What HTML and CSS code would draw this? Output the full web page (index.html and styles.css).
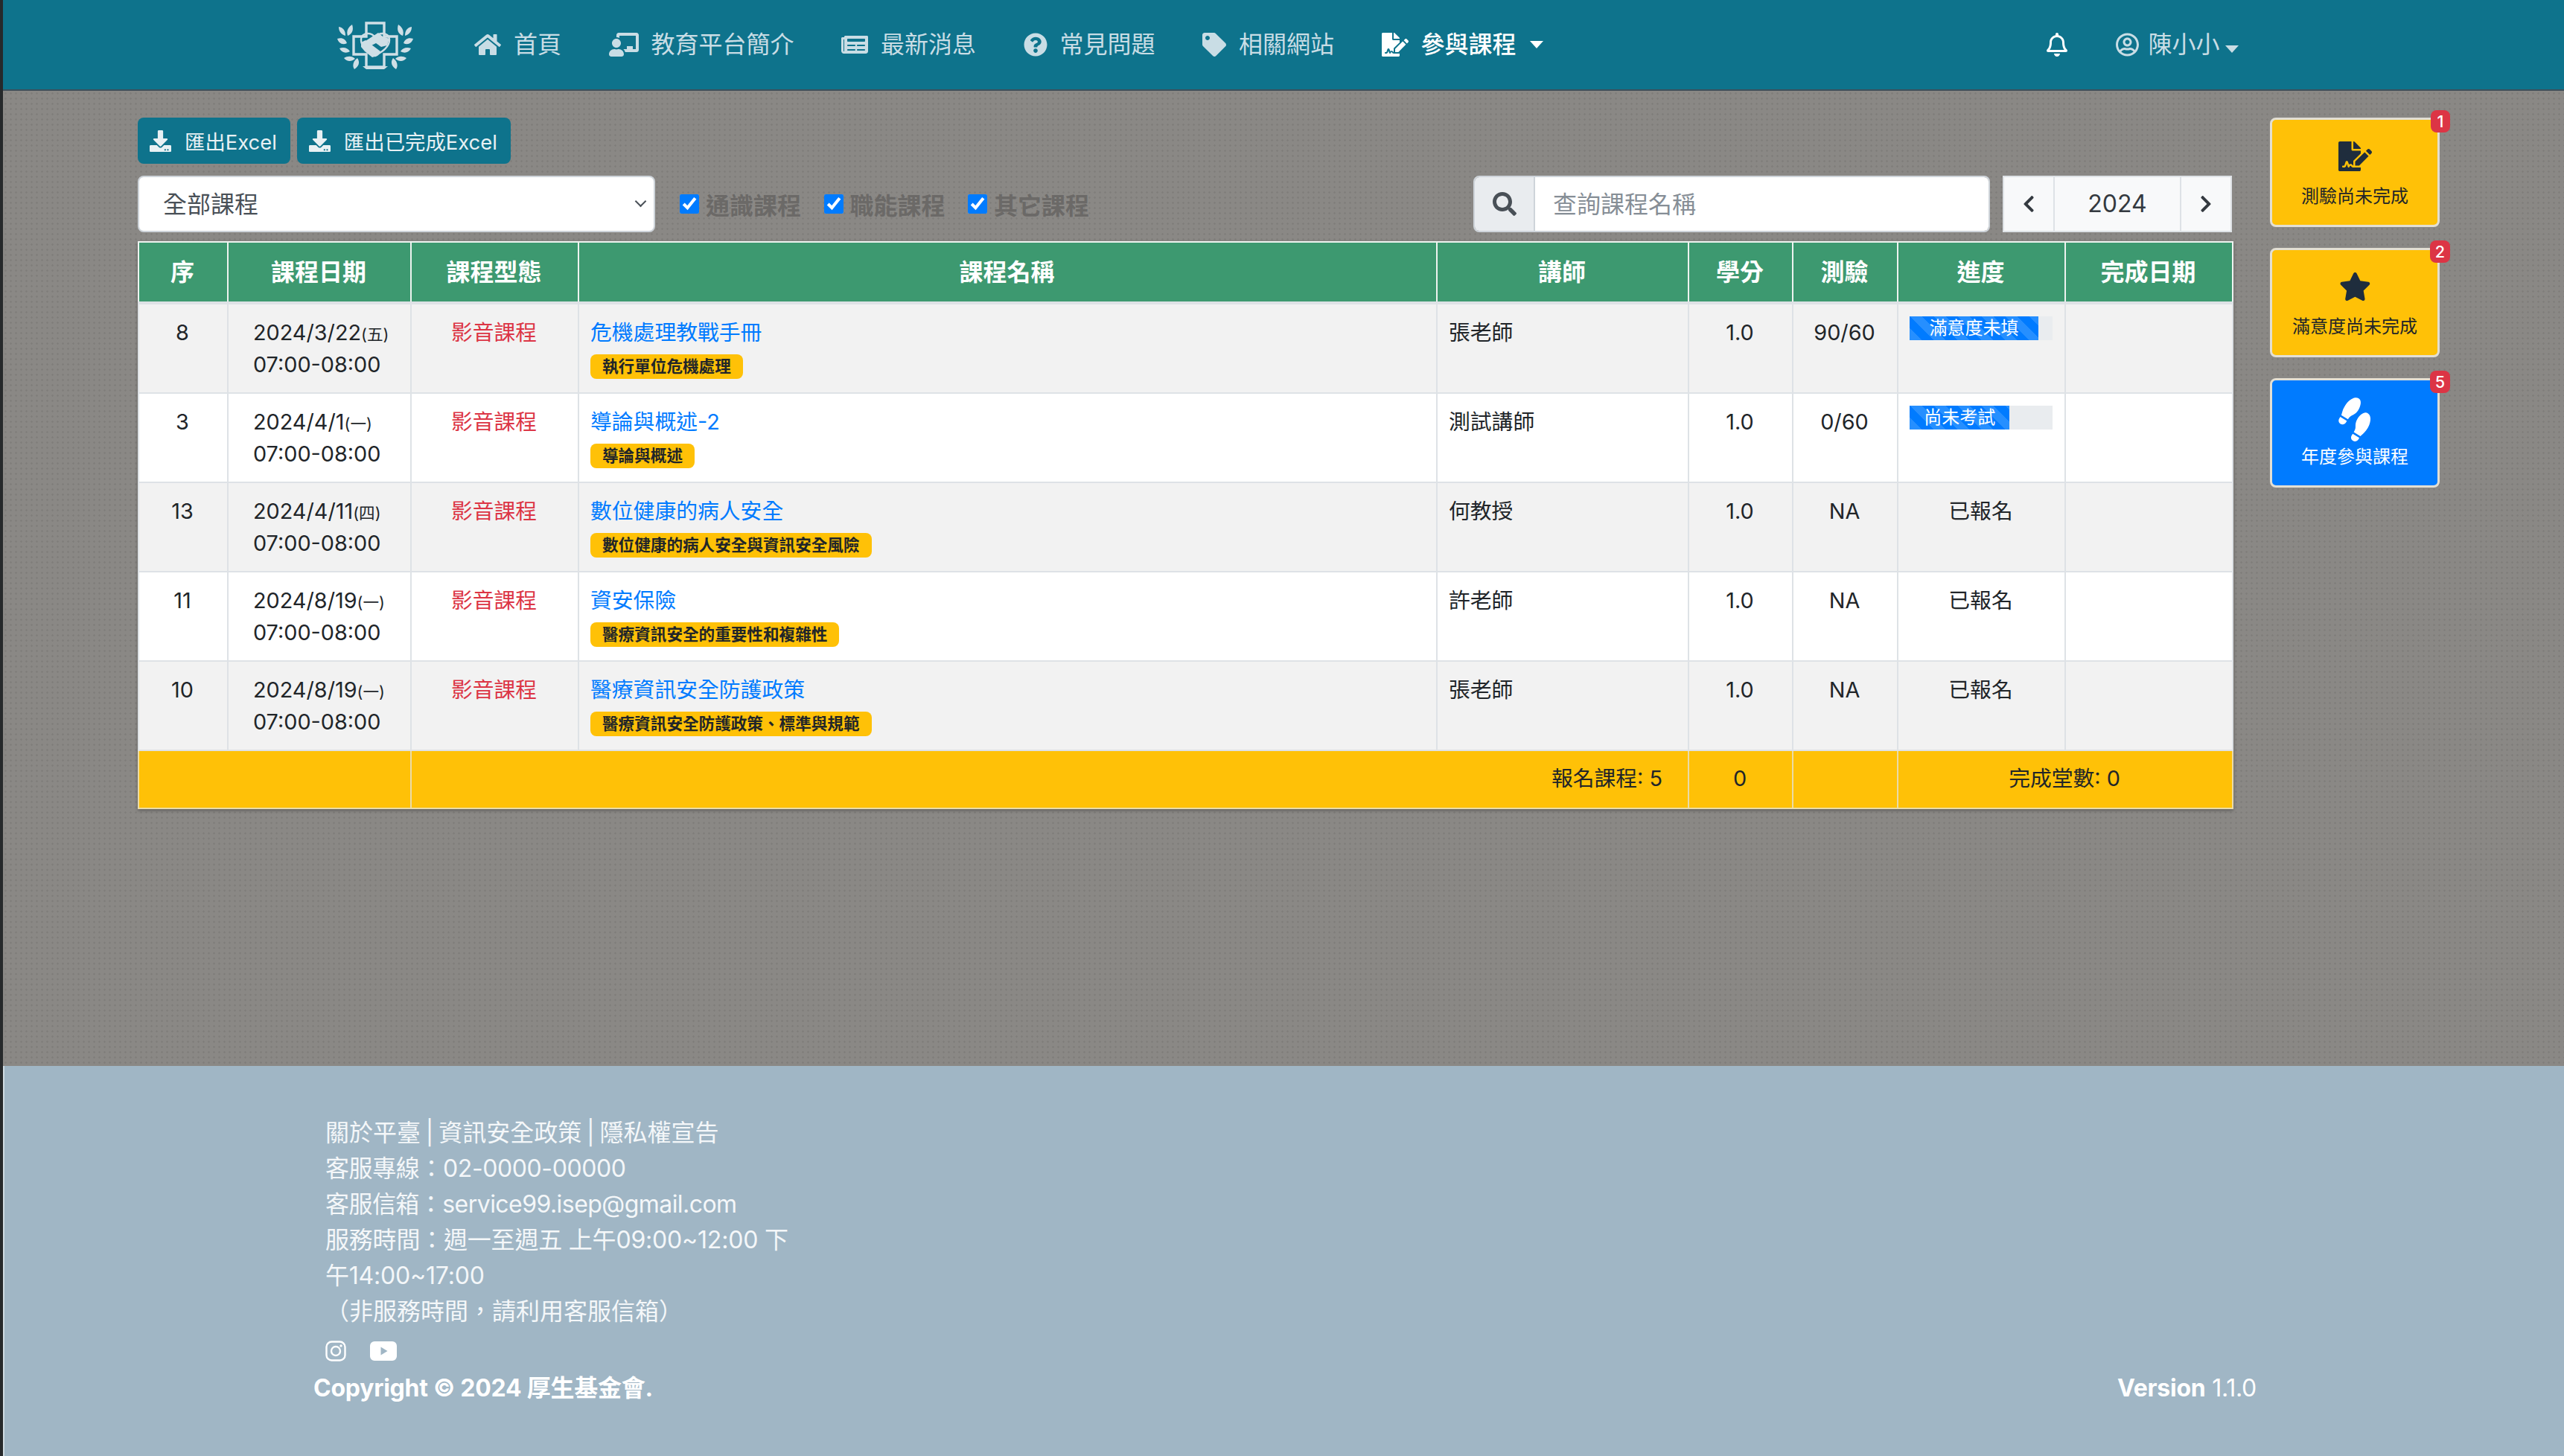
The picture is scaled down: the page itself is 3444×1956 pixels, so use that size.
FILE: index.html
```html
<!DOCTYPE html>
<html lang="zh-Hant">

<head>
    <meta charset="UTF-8">
    <title>參與課程</title>
    <link rel="stylesheet" href="styles.css">
</head>

<body>
    <svg class="defs" aria-hidden="true">
        <symbol id="i-download" viewBox="0 0 512 512"><path d="M216 0h80c13.3 0 24 10.7 24 24v168h87.7c17.8 0 26.7 21.5 14.1 34.1L269.7 378.3c-7.5 7.5-19.8 7.5-27.3 0L90.1 226.1c-12.6-12.6-3.7-34.1 14.1-34.1H192V24c0-13.3 10.7-24 24-24zm296 376v112c0 13.3-10.7 24-24 24H24c-13.3 0-24-10.7-24-24V376c0-13.3 10.7-24 24-24h146.7l49 49c20.1 20.1 52.5 20.1 72.6 0l49-49H488c13.3 0 24 10.7 24 24zm-124 88c0-11-9-20-20-20s-20 9-20 20 9 20 20 20 20-9 20-20zm64 0c0-11-9-20-20-20s-20 9-20 20 9 20 20 20 20-9 20-20z"/></symbol>
        <symbol id="i-sign" viewBox="0 0 576 512"><path d="M218.17 424.14c-2.95-5.92-8.09-6.52-10.17-6.52s-7.22.59-10.02 6.19l-7.67 15.34c-6.37 12.78-25.03 11.37-29.48-2.09L144 386.59l-10.61 31.88c-5.89 17.66-22.38 29.53-41 29.53H80c-8.84 0-16-7.16-16-16s7.16-16 16-16h12.39c4.83 0 9.11-3.08 10.64-7.66l18.19-54.64c3.3-9.81 12.44-16.41 22.78-16.41s19.48 6.59 22.77 16.41l13.88 41.64c19.75-16.19 54.06-9.7 66 14.16 1.89 3.78 5.49 5.95 9.36 6.26v-82.12l128-127.09V160H248c-13.2 0-24-10.8-24-24V0H24C10.7 0 0 10.7 0 24v464c0 13.3 10.7 24 24 24h336c13.3 0 24-10.7 24-24v-40l-128-.11c-16.12-.31-30.58-9.28-37.83-23.75zM384 121.9c0-6.3-2.5-12.4-7-16.9L279.1 7c-4.5-4.5-10.6-7-17-7H256v128h128v-6.1zm-96 225.06V416h68.99l161.68-162.78-67.88-67.88L288 346.96zm280.54-179.63l-31.87-31.87c-9.94-9.94-26.07-9.94-36.01 0l-27.25 27.25 67.88 67.88 27.25-27.25c9.95-9.94 9.95-26.07 0-36.01z"/></symbol>
    </svg>

    <div class="page">
        <header class="navbar">
            <svg class="logo" viewBox="0 0 100 66">
                <g fill="none" stroke="#cfdfe6" stroke-width="3.4">
                    <path d="M38 3h24v18h17v24H62v17H38V45H21V21h17z"/>
                    <path d="M50 47C40 41 31 35 31 26c0-6 4-9 9-9 4 0 8 2 10 6 2-4 6-6 10-6 5 0 9 3 9 9 0 9-9 15-19 21z" stroke-width="2.4"/>
                </g>
                <g fill="#cfdfe6">
                    <path d="M37 27l17-11 6 5 9 3-3 9-8 2-7-5-6 3z"/>
                    <path d="M31 29l6-3 20 15-4 6-7 2-10-8-5-6z"/>
                    <path d="M1 8c6 1 9 5 9 12-6-2-9-6-9-12zM19 5c2 6 1 12-6 15-2-6 0-11 6-15zM-1 24c6-2 11 0 13 6-6 3-11 0-13-6zM2 37c5-2 11-1 14 4-5 3-11 2-14-4zM8 50c5-3 11-3 15 1-5 4-11 4-15-1zM22 65c-3-4-2-11 4-15 4 6 2 11-4 15zM99 8c-6 1-9 5-9 12 6-2 9-6 9-12zM81 5c-2 6-1 12 6 15 2-6 0-11-6-15zM101 24c-6-2-11 0-13 6 6 3 11 0 13-6zM98 37c-5-2-11-1-14 4 5 3 11 2 14-4zM92 50c-5-3-11-3-15 1 5 4 11 4 15-1zM78 65c3-4 2-11-4-15-4 6-2 11 4 15z"/>
                    <path d="M33 61h34l-5 4H38z"/>
                </g>
            </svg>
            <nav class="nav-links">
                <a class="nav-item" href="#">
                    <svg class="icon-32" viewBox="0 0 576 512"><path d="M280.37 148.26L96 300.11V464a16 16 0 0 0 16 16l112.06-.29a16 16 0 0 0 15.92-16V368a16 16 0 0 1 16-16h64a16 16 0 0 1 16 16v95.64a16 16 0 0 0 16 16.05L464 480a16 16 0 0 0 16-16V300L295.67 148.26a12.19 12.19 0 0 0-15.3 0zM571.6 251.47L488 182.56V44.05a12 12 0 0 0-12-12h-56a12 12 0 0 0-12 12v72.61L318.47 43a48 48 0 0 0-61 0L4.34 251.47a12 12 0 0 0-1.6 16.9l25.5 31A12 12 0 0 0 45.15 301l235.22-193.74a12.19 12.19 0 0 1 15.3 0L530.9 301a12 12 0 0 0 16.9-1.6l25.5-31a12 12 0 0 0-1.7-16.93z"/></svg>
                    首頁
                </a>
                <a class="nav-item" href="#">
                    <svg class="icon-32" viewBox="0 0 640 512"><path d="M208 352c-2.39 0-4.78.35-7.06 1.09C187.98 357.3 174.35 360 160 360c-14.35 0-27.98-2.7-40.95-6.91-2.28-.74-4.66-1.09-7.05-1.09C49.94 352-.33 402.48 0 464.62.14 490.88 21.73 512 48 512h224c26.27 0 47.86-21.12 48-47.38.33-62.14-49.94-112.62-112-112.62zm-48-32c53.02 0 96-42.98 96-96s-42.98-96-96-96-96 42.98-96 96 42.98 96 96 96zM592 0H208c-26.47 0-48 22.25-48 49.59V96c23.42 0 45.1 6.78 64 17.8V64h352v288h-64v-64H384v64h-76.24c19.1 16.69 33.12 38.73 39.69 64H592c26.47 0 48-22.25 48-49.59V49.59C640 22.25 618.47 0 592 0z"/></svg>
                    教育平台簡介
                </a>
                <a class="nav-item" href="#">
                    <svg class="icon-32" viewBox="0 0 576 512"><path d="M552 64H88c-13.255 0-24 10.745-24 24v8H24c-13.255 0-24 10.745-24 24v272c0 30.928 25.072 56 56 56h472c26.51 0 48-21.49 48-48V88c0-13.255-10.745-24-24-24zM56 400a8 8 0 0 1-8-8V144h16v248a8 8 0 0 1-8 8zm236-16H140c-6.627 0-12-5.373-12-12v-8c0-6.627 5.373-12 12-12h152c6.627 0 12 5.373 12 12v8c0 6.627-5.373 12-12 12zm208 0H348c-6.627 0-12-5.373-12-12v-8c0-6.627 5.373-12 12-12h152c6.627 0 12 5.373 12 12v8c0 6.627-5.373 12-12 12zm-208-96H140c-6.627 0-12-5.373-12-12v-8c0-6.627 5.373-12 12-12h152c6.627 0 12 5.373 12 12v8c0 6.627-5.373 12-12 12zm208 0H348c-6.627 0-12-5.373-12-12v-8c0-6.627 5.373-12 12-12h152c6.627 0 12 5.373 12 12v8c0 6.627-5.373 12-12 12zm0-96H140c-6.627 0-12-5.373-12-12v-40c0-6.627 5.373-12 12-12h360c6.627 0 12 5.373 12 12v40c0 6.627-5.373 12-12 12z"/></svg>
                    最新消息
                </a>
                <a class="nav-item" href="#">
                    <svg class="icon-32" viewBox="0 0 512 512"><path d="M504 256c0 136.997-111.043 248-248 248S8 392.997 8 256C8 119.083 119.043 8 256 8s248 111.083 248 248zM262.655 90c-54.497 0-89.255 22.957-116.549 63.758-3.536 5.286-2.353 12.415 2.715 16.258l34.699 26.31c5.205 3.947 12.621 3.008 16.665-2.122 17.864-22.658 30.113-35.797 57.303-35.797 20.429 0 45.698 13.148 45.698 32.958 0 14.976-12.363 22.667-32.534 33.976C247.128 238.528 216 254.941 216 296v4c0 6.627 5.373 12 12 12h56c6.627 0 12-5.373 12-12v-1.333c0-28.462 83.186-29.647 83.186-106.667 0-58.002-60.165-102-116.531-102zM256 338c-25.365 0-46 20.635-46 46 0 25.364 20.635 46 46 46s46-20.636 46-46c0-25.365-20.635-46-46-46z"/></svg>
                    常見問題
                </a>
                <a class="nav-item" href="#">
                    <svg class="icon-32" viewBox="0 0 512 512"><path d="M0 252.118V48C0 21.49 21.49 0 48 0h204.118a48 48 0 0 1 33.941 14.059l211.882 211.882c18.745 18.745 18.745 49.137 0 67.882L293.823 497.941c-18.745 18.745-49.137 18.745-67.882 0L14.059 286.059A48 48 0 0 1 0 252.118zM112 64c-26.51 0-48 21.49-48 48s21.49 48 48 48 48-21.49 48-48-21.49-48-48-48z"/></svg>
                    相關網站
                </a>
                <a class="nav-item active" href="#">
                    <svg class="icon-32" viewBox="0 0 576 512"><use href="#i-sign"/></svg>
                    參與課程
                    <span class="caret"></span>
                </a>
            </nav>
            <div class="nav-user">
                <svg class="bell" viewBox="0 0 448 512"><path d="M439.39 362.29c-19.32-20.76-55.47-51.99-55.47-154.29 0-77.7-54.48-139.9-127.94-155.16V32c0-17.67-14.32-32-31.98-32s-31.98 14.33-31.98 32v20.84C118.56 68.1 64.08 130.3 64.08 208c0 102.3-36.15 133.53-55.47 154.29-6 6.45-8.66 14.16-8.61 21.71.11 16.4 12.98 32 32.1 32h383.8c19.12 0 32-15.6 32.1-32 .05-7.55-2.61-15.27-8.61-21.71zM67.53 368c21.22-27.97 44.42-74.33 44.53-159.42 0-.2-.06-.38-.06-.58 0-61.86 50.14-112 112-112s112 50.14 112 112c0 .2-.06.38-.06.58.11 85.1 23.31 131.46 44.53 159.42H67.53zM224 512c35.32 0 63.97-28.65 63.97-64H160.03c0 35.35 28.65 64 63.97 64z"/></svg>
                <a class="user" href="#">
                    <svg class="icon-32" viewBox="0 0 496 512"><path d="M248 104c-53 0-96 43-96 96s43 96 96 96 96-43 96-96-43-96-96-96zm0 144c-26.5 0-48-21.5-48-48s21.5-48 48-48 48 21.5 48 48-21.5 48-48 48zm0-240C111 8 0 119 0 256s111 248 248 248 248-111 248-248S385 8 248 8zm0 448c-49.7 0-95.1-18.3-130.1-48.4 14.9-23 40.4-38.6 69.6-39.5 20.8 6.4 40.6 9.6 60.5 9.6s39.7-3.1 60.5-9.6c29.2 1 54.7 16.5 69.6 39.5-35 30.1-80.4 48.4-130.1 48.4zm162.7-84.1c-24.4-31.4-62.1-51.9-105.1-51.9-10.2 0-26 9.6-57.6 9.6-31.5 0-47.4-9.6-57.6-9.6-42.9 0-80.6 20.5-105.1 51.9C61.9 339.2 48 299.2 48 256c0-110.3 89.7-200 200-200s200 89.7 200 200c0 43.2-13.9 83.2-37.3 115.9z"/></svg>
                    陳小小
                    <span class="caret low"></span>
                </a>
            </div>
        </header>

        <main class="main">
            <section class="content">
                <div class="export-row">
                    <a class="btn-export" href="#"><svg class="icon-29" viewBox="0 0 512 512"><use href="#i-download"/></svg>匯出Excel</a>
                    <a class="btn-export" href="#"><svg class="icon-29" viewBox="0 0 512 512"><use href="#i-download"/></svg>匯出已完成Excel</a>
                </div>

                <div class="toolbar">
                    <div class="select-wrap">
                        <select class="select">
                            <option>全部課程</option>
                        </select>
                    </div>
                    <div class="filters">
                        <label class="filter"><input type="checkbox" checked>通識課程</label>
                        <label class="filter"><input type="checkbox" checked>職能課程</label>
                        <label class="filter"><input type="checkbox" checked>其它課程</label>
                    </div>
                    <div class="search">
                        <span class="search-icon">
                            <svg viewBox="0 0 512 512"><path d="M505 442.7L405.3 343c-4.5-4.5-10.6-7-17-7H372c27.6-35.3 44-79.7 44-128C416 93.1 322.9 0 208 0S0 93.1 0 208s93.1 208 208 208c48.3 0 92.7-16.4 128-44v16.3c0 6.4 2.5 12.5 7 17l99.7 99.7c9.4 9.4 24.6 9.4 33.9 0l28.3-28.3c9.4-9.4 9.4-24.6.1-34zM208 336c-70.7 0-128-57.2-128-128 0-70.7 57.2-128 128-128 70.7 0 128 57.2 128 128 0 70.7-57.2 128-128 128z"/></svg>
                        </span>
                        <input class="search-input" type="text" placeholder="查詢課程名稱">
                    </div>
                    <div class="year">
                        <span class="year-arrow"><svg viewBox="0 0 320 512"><path d="M34.52 239.03L228.87 44.69c9.37-9.37 24.57-9.37 33.94 0l22.67 22.67c9.36 9.36 9.37 24.52.04 33.9L131.49 256l154.02 154.75c9.34 9.38 9.32 24.54-.04 33.9l-22.67 22.67c-9.37 9.37-24.57 9.37-33.94 0L34.52 272.97c-9.37-9.37-9.37-24.57 0-33.94z"/></svg></span>
                        <span class="year-value">2024</span>
                        <span class="year-arrow"><svg viewBox="0 0 320 512"><path d="M285.476 272.971L91.132 467.314c-9.373 9.373-24.569 9.373-33.941 0l-22.667-22.667c-9.357-9.357-9.375-24.522-.04-33.901L188.505 256 34.484 101.255c-9.335-9.379-9.317-24.544.04-33.901l22.667-22.667c9.373-9.373 24.569-9.373 33.941 0L285.475 239.03c9.373 9.372 9.373 24.568.001 33.941z"/></svg></span>
                    </div>
                </div>

                <table class="courses">
                    <colgroup>
                        <col class="c-seq"><col class="c-date"><col class="c-type"><col class="c-name"><col class="c-teacher"><col class="c-credit"><col class="c-test"><col class="c-progress"><col class="c-done">
                    </colgroup>
                    <thead>
                        <tr>
                            <th>序</th><th>課程日期</th><th>課程型態</th><th>課程名稱</th><th>講師</th><th>學分</th><th>測驗</th><th>進度</th><th>完成日期</th>
                        </tr>
                    </thead>
                    <tbody>
                        <tr>
                            <td class="center">8</td>
                            <td class="date">2024/3/22<small>(五)</small><br>07:00-08:00</td>
                            <td class="center type">影音課程</td>
                            <td><a class="course-link" href="#">危機處理教戰手冊</a><span class="tag">執行單位危機處理</span></td>
                            <td>張老師</td>
                            <td class="center">1.0</td>
                            <td class="center">90/60</td>
                            <td><div class="progress"><div class="progress-bar w90">滿意度未填</div></div></td>
                            <td></td>
                        </tr>
                        <tr>
                            <td class="center">3</td>
                            <td class="date">2024/4/1<small>(一)</small><br>07:00-08:00</td>
                            <td class="center type">影音課程</td>
                            <td><a class="course-link" href="#">導論與概述-2</a><span class="tag">導論與概述</span></td>
                            <td>測試講師</td>
                            <td class="center">1.0</td>
                            <td class="center">0/60</td>
                            <td><div class="progress"><div class="progress-bar w70">尚未考試</div></div></td>
                            <td></td>
                        </tr>
                        <tr>
                            <td class="center">13</td>
                            <td class="date">2024/4/11<small>(四)</small><br>07:00-08:00</td>
                            <td class="center type">影音課程</td>
                            <td><a class="course-link" href="#">數位健康的病人安全</a><span class="tag">數位健康的病人安全與資訊安全風險</span></td>
                            <td>何教授</td>
                            <td class="center">1.0</td>
                            <td class="center">NA</td>
                            <td class="center">已報名</td>
                            <td></td>
                        </tr>
                        <tr>
                            <td class="center">11</td>
                            <td class="date">2024/8/19<small>(一)</small><br>07:00-08:00</td>
                            <td class="center type">影音課程</td>
                            <td><a class="course-link" href="#">資安保險</a><span class="tag">醫療資訊安全的重要性和複雜性</span></td>
                            <td>許老師</td>
                            <td class="center">1.0</td>
                            <td class="center">NA</td>
                            <td class="center">已報名</td>
                            <td></td>
                        </tr>
                        <tr>
                            <td class="center">10</td>
                            <td class="date">2024/8/19<small>(一)</small><br>07:00-08:00</td>
                            <td class="center type">影音課程</td>
                            <td><a class="course-link" href="#">醫療資訊安全防護政策</a><span class="tag">醫療資訊安全防護政策、標準與規範</span></td>
                            <td>張老師</td>
                            <td class="center">1.0</td>
                            <td class="center">NA</td>
                            <td class="center">已報名</td>
                            <td></td>
                        </tr>
                    </tbody>
                    <tfoot>
                        <tr>
                            <td colspan="2"></td>
                            <td colspan="3" class="right">報名課程: 5</td>
                            <td class="center">0</td>
                            <td></td>
                            <td colspan="2" class="center">完成堂數: 0</td>
                        </tr>
                    </tfoot>
                </table>
            </section>

            <aside class="side">
                <a class="card warning" href="#">
                    <span class="badge">1</span>
                    <span class="card-icon"><svg class="icon-sign" viewBox="0 0 576 512"><use href="#i-sign"/></svg></span>
                    <span class="card-label">測驗尚未完成</span>
                </a>
                <a class="card warning" href="#">
                    <span class="badge">2</span>
                    <span class="card-icon"><svg class="icon-star" viewBox="0 0 576 512"><path d="M259.3 17.8L194 150.2 47.9 171.5c-26.2 3.8-36.7 36.1-17.7 54.6l105.7 103-25 145.5c-4.5 26.3 23.2 46 46.4 33.7L288 439.6l130.7 68.7c23.2 12.2 50.9-7.4 46.4-33.7l-25-145.5 105.7-103c19-18.5 8.5-50.8-17.7-54.6L382 150.2 316.7 17.8c-11.7-23.6-45.6-23.9-57.4 0z"/></svg></span>
                    <span class="card-label">滿意度尚未完成</span>
                </a>
                <a class="card primary" href="#">
                    <span class="badge">5</span>
                    <span class="card-icon"><svg class="icon-shoe" viewBox="0 0 640 512"><path d="M192 160h32V32h-32c-35.35 0-64 28.65-64 64s28.65 64 64 64zM0 416c0 35.35 28.65 64 64 64h32V352H64c-35.35 0-64 28.65-64 64zm337.46-128c-34.91 0-76.16 13.12-104.73 32-24.79 16.38-44.52 32-104.73 32v128l57.53 15.97c26.21 7.28 53.01 13.12 80.31 15.05 32.69 2.31 65.6.67 97.58-6.2C472.9 481.3 512 429.22 512 384c0-64-84.02-96-174.54-96zM491.42 7.19C459.44.32 426.53-1.33 393.84.99c-27.3 1.93-54.1 7.77-80.31 15.04L256 32v128c60.2 0 79.94 15.62 104.73 32 28.57 18.88 69.82 32 104.73 32C555.98 224 640 192 640 128c0-45.22-39.1-97.3-148.58-120.81z"/></svg></span>
                    <span class="card-label">年度參與課程</span>
                </a>
            </aside>
        </main>

        <footer class="footer">
            <div class="footer-info">
                <div class="links">關於平臺 | 資訊安全政策 | 隱私權宣告</div>
                <div class="phone">客服專線：02-0000-00000</div>
                <div class="mail">客服信箱：service99.isep@gmail.com</div>
                <div class="hours">服務時間：週一至週五 上午09:00~12:00 下午14:00~17:00</div>
                <div>（非服務時間，請利用客服信箱）</div>
                <div class="social">
                    <svg class="ig" viewBox="0 0 28 28"><rect x="1.5" y="1.5" width="25" height="25" rx="7" fill="none" stroke="#fff" stroke-width="2.4"/><circle cx="14" cy="14" r="6" fill="none" stroke="#fff" stroke-width="2.4"/><circle cx="21" cy="7" r="1.7" fill="#fff"/></svg>
                    <svg class="yt" viewBox="0 0 36 26"><path fill="#fff" fill-rule="evenodd" d="M6 0h24a6 6 0 0 1 6 6v14a6 6 0 0 1-6 6H6a6 6 0 0 1-6-6V6a6 6 0 0 1 6-6zM14.500 7.500v11l9-5.500z"/></svg>
                </div>
            </div>
            <div class="footer-bottom">
                <strong>Copyright © 2024 厚生基金會.</strong>
                <span><strong>Version</strong> 1.1.0</span>
            </div>
        </footer>
    </div>
</body>

</html>
```

FILE: styles.css
```css
* {
    box-sizing: border-box;
}

body {
    margin: 0;
    font-family: Inter, "Noto Sans CJK TC", sans-serif;
    font-size: 28.8px;
    color: #212529;
}

a {
    text-decoration: none;
}

.defs {
    display: none;
}

.page {
    display: flex;
    flex-direction: column;
    min-height: 1956px;
    border-left: 4px solid #26292b;
}

/* navbar */
.navbar {
    display: flex;
    align-items: center;
    height: 122px;
    padding-left: 450px;
    background: #0e738c;
    border-bottom: 2px solid #3e4f5a;
}

.logo {
    width: 100px;
    height: 66px;
    margin-top: 1px;
    overflow: visible;
}

.nav-links {
    display: flex;
    gap: 63.5px;
    margin-left: 83px;
}

.nav-item,
.user {
    display: flex;
    align-items: center;
    gap: 17px;
    font-size: 32px;
    line-height: 48px;
    color: #c9dde5;
    fill: #c9dde5;
}

.nav-item.active {
    color: #fff;
    fill: #fff;
    font-weight: 500;
}

.icon-32 {
    height: 32px;
}

.caret {
    width: 0;
    height: 0;
    margin-left: 1px;
    border-top: 10px solid currentColor;
    border-left: 9px solid transparent;
    border-right: 9px solid transparent;
}

.caret.low {
    margin: 12px 0 0 -6px;
}

.nav-user {
    display: flex;
    align-items: center;
    gap: 65px;
    margin-left: 676px;
}

.bell {
    width: 28px;
    height: 32px;
    fill: #fff;
}

.user {
    gap: 13px;
}

/* main area */
.main {
    display: flex;
    flex: 1;
    padding: 36px 0 0 181px;
    background-color: #8a8885;
    background-image: radial-gradient(circle, #807e7b 1px, transparent 1.5px);
    background-size: 7px 7px;
}

.content {
    width: 2813px;
}

.export-row {
    display: flex;
    gap: 9px;
}

.btn-export {
    display: flex;
    align-items: center;
    gap: 18px;
    height: 62px;
    padding: 0 18px 0 16px;
    border-radius: 8px;
    background: #0e738c;
    color: #e8f1f4;
    fill: #e8f1f4;
    font-size: 27.4px;
}

.icon-29 {
    width: 29px;
    height: 29px;
}

.toolbar {
    display: flex;
    align-items: center;
    margin-top: 16px;
    height: 76px;
}

.select-wrap {
    position: relative;
    width: 695px;
    height: 76px;
}

.select-wrap::after {
    content: "";
    position: absolute;
    top: 29px;
    right: 14px;
    width: 9px;
    height: 9px;
    border-right: 2px solid #495057;
    border-bottom: 2px solid #495057;
    transform: rotate(45deg);
}

.select {
    appearance: none;
    width: 100%;
    height: 100%;
    padding: 0 32px;
    border: 2px solid #ced4da;
    border-radius: 8px;
    background: #fff;
    color: #495057;
    font: inherit;
    font-size: 32px;
}

.filters {
    display: flex;
    gap: 30.5px;
    margin-left: 33px;
}

.filter {
    display: flex;
    align-items: center;
    gap: 9px;
    font-size: 32px;
    font-weight: 700;
    color: #6b6967;
}

.filter input {
    width: 26px;
    height: 26px;
    margin: 0;
    accent-color: #007bff;
}

.search {
    display: flex;
    width: 694px;
    height: 76px;
    margin-left: auto;
    border: 2px solid #ced4da;
    border-radius: 8px;
    overflow: hidden;
}

.search-icon {
    display: flex;
    align-items: center;
    justify-content: center;
    width: 81px;
    background: #e9ecef;
    border-right: 2px solid #ced4da;
    fill: #495057;
}

.search-icon svg {
    width: 32px;
    height: 32px;
}

.search-input {
    flex: 1;
    min-width: 0;
    padding: 0 24px;
    border: 0;
    background: #fff;
    font: inherit;
    font-size: 32px;
}

.search-input::placeholder {
    color: #868e96;
}

.year {
    display: flex;
    width: 308px;
    height: 76px;
    margin-left: 17px;
    background: #f8f9fa;
    border: 2px solid #dee2e6;
    color: #343a40;
    font-size: 32px;
}

.year-arrow {
    display: flex;
    align-items: center;
    justify-content: center;
    width: 66px;
    fill: #343a40;
}

.year-arrow svg {
    width: 16px;
    height: 26px;
}

.year-value {
    flex: 1;
    line-height: 72px;
    text-align: center;
    border-left: 2px solid #dee2e6;
    border-right: 2px solid #dee2e6;
}

/* table */
.courses {
    width: 2813px;
    margin-top: 12px;
    border: 2px solid #e6e8ea;
    border-collapse: collapse;
    table-layout: fixed;
    box-shadow: 0 2px 4px rgba(0, 0, 0, .3);
    background: #fff;
}

.c-seq { width: 120px; }
.c-date { width: 246px; }
.c-type { width: 225px; }
.c-name { width: 1153px; }
.c-teacher { width: 338px; }
.c-credit { width: 140px; }
.c-test { width: 141px; }
.c-progress { width: 225px; }
.c-done { width: 225px; }

.courses th {
    height: 82px;
    padding: 0 2px 6px 0;
    border: 2px solid #eef3f0;
    border-bottom: 4px solid #dee2e6;
    background: #3d9970;
    color: #fff;
    font-size: 32px;
    font-weight: 700;
}

.courses td {
    height: 120px;
    padding: 16px 15px;
    border: 2px solid #dee2e6;
    line-height: 43px;
    vertical-align: top;
}

.courses tbody tr:nth-child(odd) {
    background: #f2f2f2;
}

.courses td.center {
    padding-left: 14px;
    padding-right: 16px;
    text-align: center;
}

.courses td.right {
    padding-right: 34px;
    text-align: right;
}

.courses .date {
    padding-left: 33px;
    white-space: nowrap;
}

.date small {
    font-size: 21.6px;
    line-height: 0;
}

.type {
    color: #dc3545;
}

.course-link {
    display: block;
    color: #007bff;
}

.tag {
    display: block;
    width: fit-content;
    height: 33px;
    margin-top: 8px;
    padding: 0 16px;
    border-radius: 8px;
    background: #ffc107;
    color: #212529;
    font-size: 21.6px;
    font-weight: 700;
    line-height: 33px;
}

.progress {
    height: 32px;
    margin-right: 1px;
    background: #e9ecef;
}

.progress-bar {
    height: 100%;
    background-color: #007bff;
    background-image: linear-gradient(45deg, rgba(255, 255, 255, .15) 25%, transparent 25%, transparent 50%, rgba(255, 255, 255, .15) 50%, rgba(255, 255, 255, .15) 75%, transparent 75%);
    background-size: 32px 32px;
    color: #fff;
    font-size: 24px;
    line-height: 32px;
    text-align: center;
}

.w90 { width: 90%; }
.w70 { width: 70%; }

.courses tfoot td {
    height: 78px;
    border-color: #eadba8;
    background: #ffc107;
    line-height: 42px;
}

/* side cards */
.side {
    display: flex;
    flex-direction: column;
    gap: 28px;
    width: 228px;
    margin-left: 51px;
}

.card {
    position: relative;
    display: flex;
    flex-direction: column;
    align-items: center;
    height: 147px;
    padding-top: 29px;
    border: 3px solid #e3dfd3;
    border-radius: 8px;
}

.card.warning {
    background: #ffc107;
    color: #212529;
    fill: #1f2d3d;
}

.card.primary {
    background: #007bff;
    color: #fff;
    fill: #fff;
}

.badge {
    position: absolute;
    top: -13px;
    right: -17px;
    min-width: 26px;
    height: 30px;
    padding: 0 7px;
    border-radius: 8px;
    background: #dc3545;
    color: #fff;
    font-size: 21.6px;
    font-weight: 500;
    line-height: 30px;
    text-align: center;
}

.card-icon {
    display: flex;
    align-items: center;
    justify-content: center;
    height: 40px;
}

.icon-sign {
    height: 40px;
}

.icon-star {
    height: 38px;
}

.icon-shoe {
    height: 42px;
    margin-top: 6px;
    transform: rotate(-58deg);
}

.card-label {
    margin-top: 16px;
    font-size: 24px;
    line-height: 36px;
}

/* footer */
.footer {
    height: 524px;
    padding-top: 66px;
    background: #a0b6c5;
    border-left: 2px solid #cfdbe2;
    color: #f4f7f9;
    font-size: 32px;
    line-height: 48px;
}

.footer-info {
    width: 640px;
    margin-left: 431px;
}

.links {
    word-spacing: -2.2px;
}

.phone {
    letter-spacing: -.4px;
}

.mail {
    letter-spacing: -.55px;
}

.hours {
    letter-spacing: -.2px;
}

.social {
    display: flex;
    align-items: center;
    gap: 32px;
    height: 52px;
    padding-top: 6px;
}

.ig {
    width: 28px;
    height: 28px;
}

.yt {
    width: 36px;
    height: 26px;
}

.footer-bottom {
    display: flex;
    justify-content: space-between;
    width: 2610px;
    margin: 3px 0 0 415px;
    color: #fff;
    letter-spacing: -.25px;
}
```
